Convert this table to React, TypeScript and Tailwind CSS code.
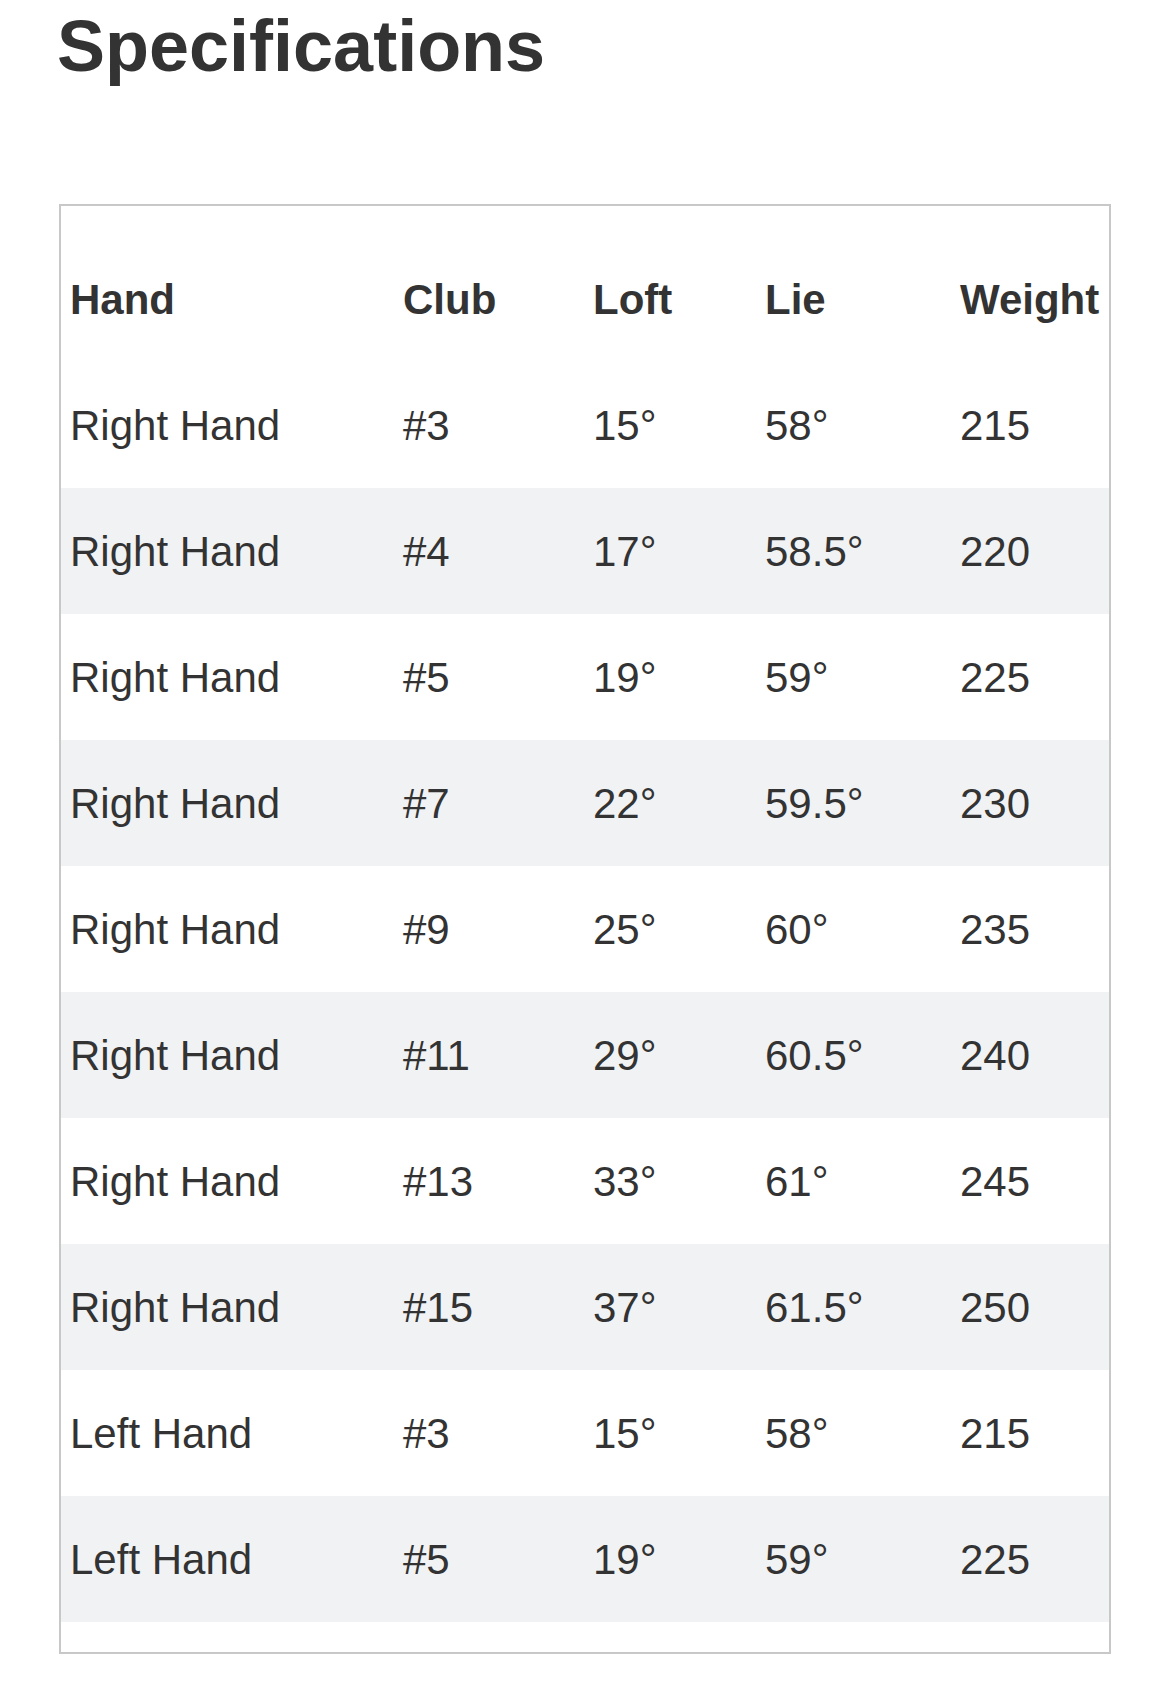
import React from "react";

const rows = [
  ["Right Hand", "#3", "15°", "58°", "215"],
  ["Right Hand", "#4", "17°", "58.5°", "220"],
  ["Right Hand", "#5", "19°", "59°", "225"],
  ["Right Hand", "#7", "22°", "59.5°", "230"],
  ["Right Hand", "#9", "25°", "60°", "235"],
  ["Right Hand", "#11", "29°", "60.5°", "240"],
  ["Right Hand", "#13", "33°", "61°", "245"],
  ["Right Hand", "#15", "37°", "61.5°", "250"],
  ["Left Hand", "#3", "15°", "58°", "215"],
  ["Left Hand", "#5", "19°", "59°", "225"],
];

const headers = ["Hand", "Club", "Loft", "Lie", "Weight"];

const cols = "grid grid-cols-[333px_190px_172px_195px_1fr]";

const App = () => {
  return (
    <div className="w-[1170px] min-h-[1684px] bg-white text-[#333] font-['Liberation_Sans',Arial,sans-serif]">
      <h1 className="pl-[57px] pt-[10px] text-[72px] leading-none font-bold">
        Specifications
      </h1>
      <div className="mx-[59px] mt-[122px] border-2 border-[#c8c8c8] py-[30px]">
        <div className={`${cols} h-[126px] items-center`}>
          {headers.map((h) => (
            <div key={h} className="pl-[9px] text-[42px] font-bold whitespace-nowrap">
              {h}
            </div>
          ))}
        </div>
        {rows.map((r, i) => (
          <div
            key={i}
            className={`${cols} h-[126px] items-center ${i % 2 === 1 ? "bg-[#f1f2f4]" : "bg-white"}`}
          >
            {r.map((c, j) => (
              <div key={j} className="pl-[9px] text-[42px] whitespace-nowrap">
                {c}
              </div>
            ))}
          </div>
        ))}
      </div>
    </div>
  );
};

export default App;
